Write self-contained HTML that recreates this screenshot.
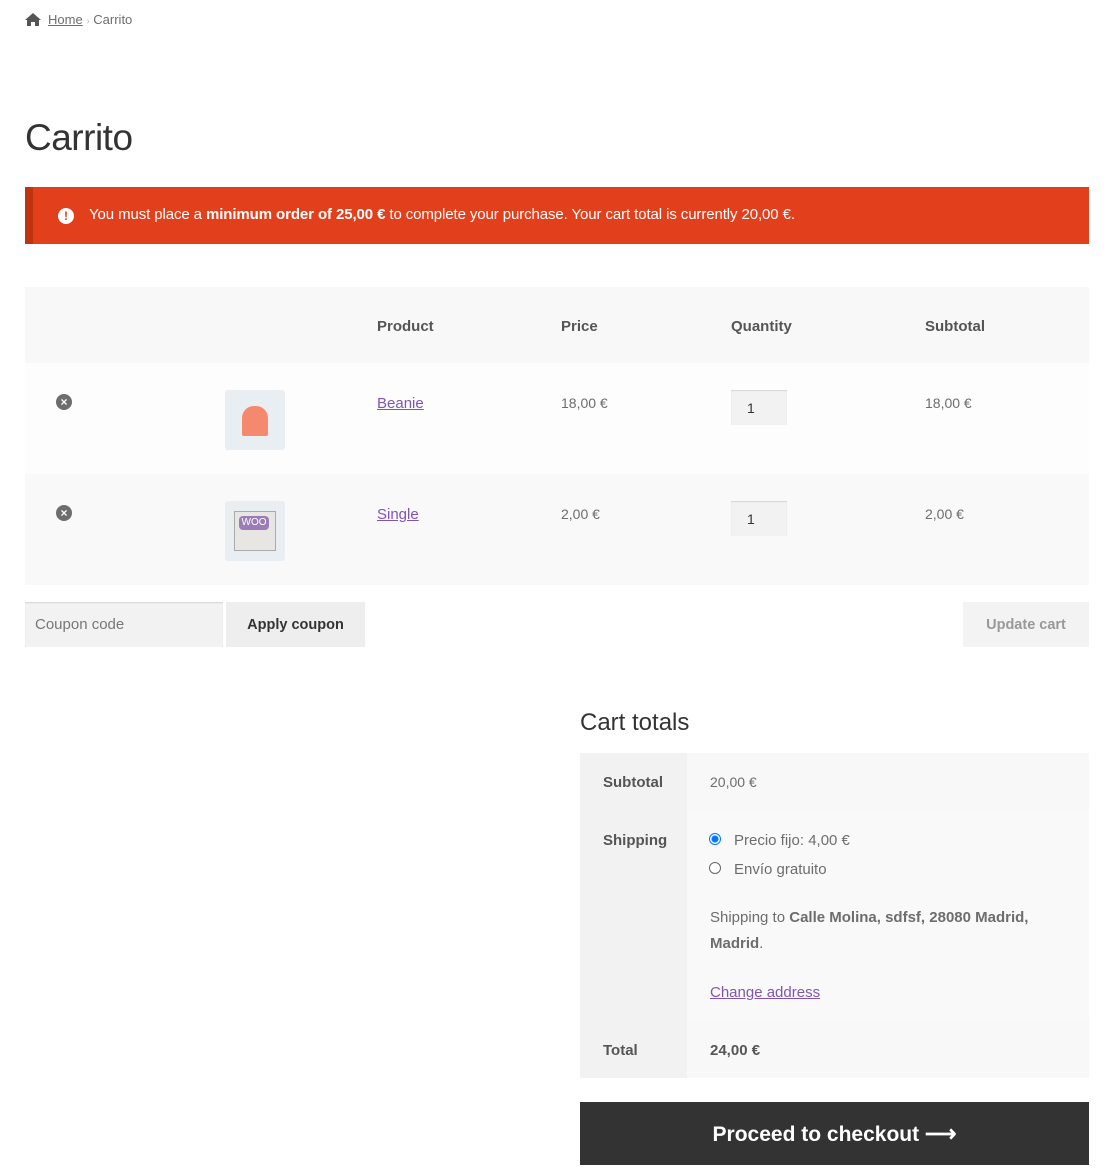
<!DOCTYPE html><html><head><meta charset="utf-8"><style>
body{margin:0;background:#fff;font-family:"Liberation Sans",sans-serif;color:#6d6d6d;font-size:15px;width:1114px;height:1176px;overflow:hidden;position:relative}
.a{position:absolute}
a{color:#7f54b3}
.th{font-weight:bold;color:#555;font-size:15px}
.qty{position:absolute;width:56px;height:35px;background:#f2f2f2;box-shadow:inset 0 1px 1px rgba(0,0,0,.125);color:#333;font-size:14px;line-height:37px;text-indent:16px}
.x{position:absolute;width:16px;height:16px;border-radius:50%;background:#6d6d6d;color:#fff;font-size:12px;line-height:16px;text-align:center;font-weight:bold}
.img{position:absolute;width:60px;height:60px;background:#e9eef2;border-radius:3px}
</style></head><body>
<svg class="a" style="left:25px;top:13px" width="16" height="13" viewBox="0 0 16 13"><path d="M8 0L0 7h2v6h4V9h4v4h4V7h2z" fill="#555"/></svg>
<div class="a" style="left:48px;top:12px;font-size:13px"><a style="color:#6d6d6d" href="#">Home</a> <span style="color:#bbb;font-size:10px">›</span> <span style="color:#6d6d6d">Carrito</span></div>
<div class="a" style="left:25px;top:117px;font-size:37px;color:#333;font-weight:300;letter-spacing:-0.5px">Carrito</div>
<div class="a" style="left:25px;top:187px;width:1064px;height:57px;background:#e2401c;border-left:8px solid #c0330f;box-sizing:border-box"></div>
<div class="a" style="left:58px;top:208px;width:16px;height:16px;border-radius:50%;background:#fff;color:#e2401c;font-weight:bold;font-size:12px;text-align:center;line-height:16px">!</div>
<div class="a" style="left:89px;top:206px;color:#fff;font-size:15px;letter-spacing:-0.1px">You must place a <b>minimum order of 25,00 €</b> to complete your purchase. Your cart total is currently 20,00 €.</div>
<div class="a" style="left:25px;top:287px;width:1064px;height:76px;background:#f8f8f8"></div>
<div class="a" style="left:25px;top:363px;width:1064px;height:111px;background:#fdfdfd"></div>
<div class="a" style="left:25px;top:474px;width:1064px;height:111px;background:#f9f9f9"></div>
<div class="a th" style="left:377px;top:318px">Product</div>
<div class="a th" style="left:561px;top:318px">Price</div>
<div class="a th" style="left:731px;top:318px">Quantity</div>
<div class="a th" style="left:925px;top:318px">Subtotal</div>
<div class="x" style="left:56px;top:394px">×</div>
<div class="x" style="left:56px;top:505px">×</div>
<div class="img" style="left:225px;top:390px"><div class="a" style="left:17px;top:16px;width:26px;height:30px;background:#f5896e;border-radius:12px 12px 2px 2px"></div></div>
<div class="img" style="left:225px;top:501px"><div class="a" style="left:9px;top:10px;width:40px;height:38px;background:#e8e6e2;border:1px solid #aaa"></div><div class="a" style="left:14px;top:15px;width:30px;height:14px;background:#9b7cb6;border-radius:4px;color:#fff;font-size:10px;text-align:center;line-height:14px">WOO</div></div>
<div class="a" style="left:377px;top:395px"><a href="#">Beanie</a></div>
<div class="a" style="left:377px;top:506px"><a href="#">Single</a></div>
<div class="a" style="left:561px;top:395px;font-size:14px">18,00 €</div>
<div class="a" style="left:561px;top:506px;font-size:14px">2,00 €</div>
<div class="qty" style="left:731px;top:390px">1</div>
<div class="qty" style="left:731px;top:501px">1</div>
<div class="a" style="left:925px;top:395px;font-size:14px">18,00 €</div>
<div class="a" style="left:925px;top:506px;font-size:14px">2,00 €</div>
<div class="a" style="left:25px;top:602px;width:198px;height:45px;background:#f2f2f2;box-shadow:inset 0 1px 1px rgba(0,0,0,.125);line-height:46px;text-indent:10px;color:#777">Coupon code</div>
<div class="a" style="left:226px;top:602px;width:139px;height:45px;background:#eee;color:#333;font-weight:bold;text-align:center;line-height:46px;font-size:14.5px">Apply coupon</div>
<div class="a" style="left:963px;top:602px;width:126px;height:45px;background:#f3f3f3;color:#999;font-weight:bold;text-align:center;line-height:46px;font-size:14.5px">Update cart</div>
<div class="a" style="left:580px;top:709px;font-size:24px;color:#333;font-weight:300">Cart totals</div>
<div class="a" style="left:580px;top:753px;width:107px;height:325px;background:#f2f2f2"></div>
<div class="a" style="left:687px;top:753px;width:402px;height:325px;background:#f8f8f8"></div>
<div class="a" style="left:687px;top:810px;width:402px;height:210px;background:#f9f9f9"></div>
<div class="a th" style="left:603px;top:774px">Subtotal</div>
<div class="a th" style="left:603px;top:832px">Shipping</div>
<div class="a th" style="left:603px;top:1042px">Total</div>
<div class="a" style="left:710px;top:774px;font-size:14px">20,00 €</div>
<div class="a" style="left:709px;top:833px;width:10px;height:10px;border-radius:50%;border:1px solid #0075ff;background:radial-gradient(#0075ff 3px,#fff 4px)"></div>
<div class="a" style="left:709px;top:862px;width:10px;height:10px;border-radius:50%;border:1px solid #666;background:#fff"></div>
<div class="a" style="left:734px;top:832px">Precio fijo: 4,00 €</div>
<div class="a" style="left:734px;top:861px">Envío gratuito</div>
<div class="a" style="left:710px;top:905px;width:330px;line-height:26px">Shipping to <b>Calle Molina, sdfsf, 28080 Madrid, Madrid</b>.</div>
<div class="a" style="left:710px;top:984px"><a href="#">Change address</a></div>
<div class="a" style="left:710px;top:1042px;font-weight:bold;color:#555">24,00 €</div>
<div class="a" style="left:580px;top:1102px;width:509px;height:63px;background:#333;color:#fff;font-weight:bold;font-size:21px;text-align:center;line-height:64px">Proceed to checkout <span style="font-size:22px">⟶</span></div>
</body></html>
